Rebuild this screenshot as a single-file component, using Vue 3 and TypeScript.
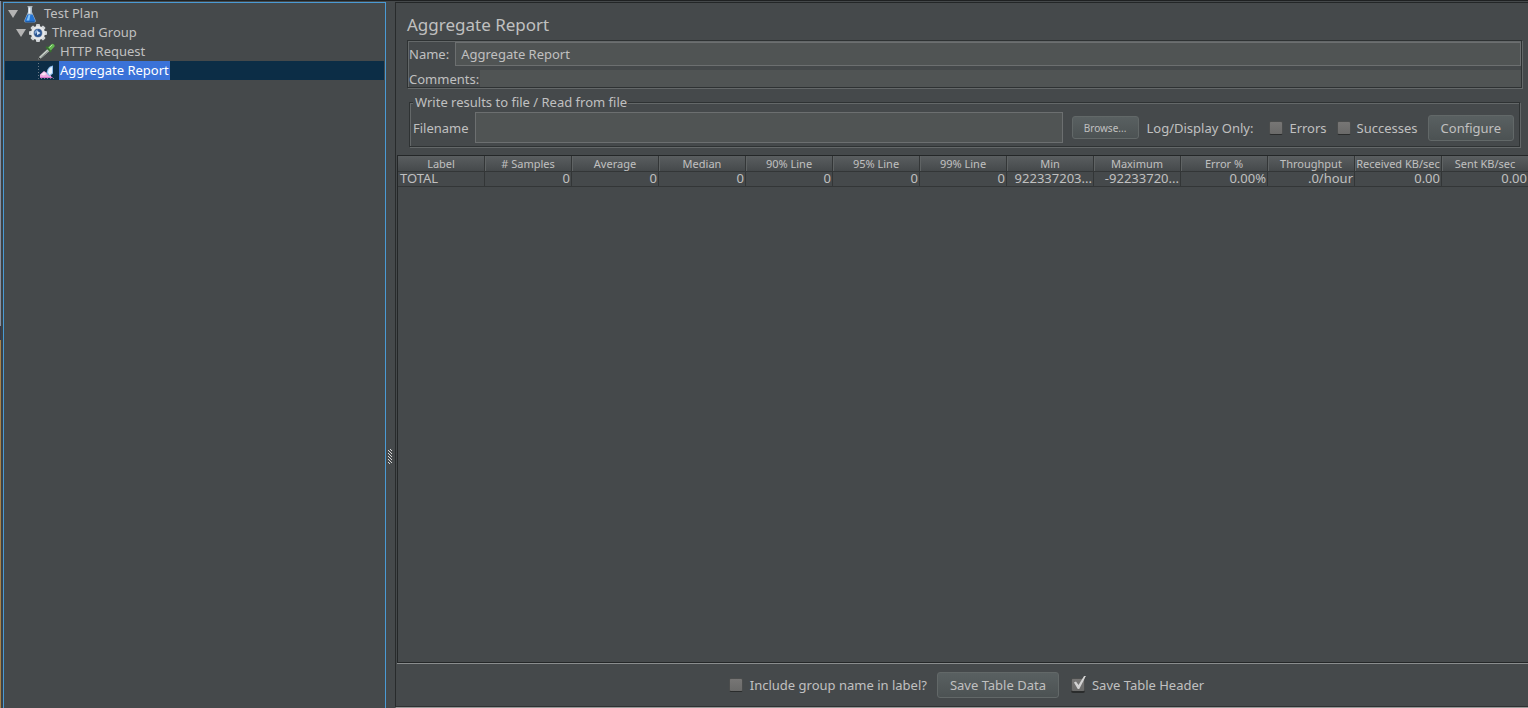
<script setup lang="ts">
import { ref } from 'vue'

type IconName = 'flask' | 'gear' | 'dropper' | 'chart'

interface TreeNode {
  label: string
  icon: IconName
  depth: number
  open?: boolean
}

const nodes: TreeNode[] = [
  { label: 'Test Plan', icon: 'flask', depth: 0, open: true },
  { label: 'Thread Group', icon: 'gear', depth: 1, open: true },
  { label: 'HTTP Request', icon: 'dropper', depth: 2 },
  { label: 'Aggregate Report', icon: 'chart', depth: 2 },
]
const selected = ref('Aggregate Report')

const name = ref('Aggregate Report')
const comments = ref('')
const filename = ref('')
const errorsOnly = ref(false)
const successesOnly = ref(false)
const includeGroup = ref(false)
const saveHeader = ref(true)

const columns: string[] = [
  'Label', '# Samples', 'Average', 'Median', '90% Line', '95% Line', '99% Line',
  'Min', 'Maximum', 'Error %', 'Throughput', 'Received KB/sec', 'Sent KB/sec',
]
const rows: string[][] = [
  ['TOTAL', '0', '0', '0', '0', '0', '0', '922337203...', '-92233720...', '0.00%', '.0/hour', '0.00', '0.00'],
]
</script>

<template>
  <div class="window">
    <div class="edge"></div>
    <nav class="tree" aria-label="Test plan tree">
      <ul>
        <li
          v-for="node in nodes"
          :key="node.label"
          class="node"
          :class="['depth-' + node.depth, { selected: node.label === selected }]"
          @click="selected = node.label"
        >
          <svg v-if="node.open" class="arrow" viewBox="0 0 10 8" aria-hidden="true">
            <path d="M0 0h10L5 8z" fill="#b4b4b4" />
          </svg>
          <svg v-if="node.icon === 'flask'" class="icon" viewBox="0 0 18 18" aria-hidden="true">
            <path d="M7 2h4v5l3.500 8q.6 2.500-1.500 2.500H5q-2.100 0-1.500-2.500L7 7z" fill="#aebfce" />
            <path d="M6.400 9.500h5.200l2.600 6q.3 1.500-1.200 1.500H5q-1.500 0-1.200-1.500z" fill="#2474d4" />
            <path d="M7.500 10h1.800l-1 5.500H5.500z" fill="#86c4f8" />
            <path d="M6.500 1h5v1.300h-5z" fill="#aeb4b8" />
            <path d="M7.800 2.500h1.600v6H7.500z" fill="#f4f7fa" />
            <path d="M4.500 17h9" stroke="#164b8c" />
          </svg>
          <svg v-else-if="node.icon === 'gear'" class="icon" viewBox="0 0 18 18" aria-hidden="true">
            <g fill="#cfd3d6">
              <rect v-for="a in 4" :key="a" x="7" y="0" width="4" height="18" rx="1" :transform="`rotate(${a * 45} 9 9)`" />
              <circle cx="9" cy="9" r="7" fill="#e6e8ea" />
            </g>
            <circle cx="9" cy="9" r="4.600" fill="#9aa9bb" />
            <circle cx="9" cy="9" r="3.900" fill="#2b5592" />
            <path d="M5.500 8.500q1-3 3.500-3L7.500 9l-1.500 1z" fill="#86a9d6" />
            <path d="M8 6.800l3.600 2.200L8 11.200z" fill="#d5e5f7" />
          </svg>
          <svg v-else-if="node.icon === 'dropper'" class="icon" viewBox="0 0 18 18" aria-hidden="true">
            <path d="M1 17l1.500-3.500 8-7.500 2 2-8 7z" fill="#c5ccc6" />
            <path d="M3.500 15l8-7" stroke="#7f8783" />
            <path d="M1 17l1.500-2.500 1 1z" fill="#252829" />
            <path d="M8.500 4.500l5 5 1.500-1.500-5-5z" fill="#35702d" />
            <path d="M11 4.500l3.300-3.300q1.400-1 2.700.2t.1 2.700l-3.300 3.400z" fill="#62b550" />
            <path d="M12.500 4.500l2.700-2.700" stroke="#b5eaa5" />
          </svg>
          <svg v-else class="icon" viewBox="0 0 18 18" aria-hidden="true">
            <path d="M1.500 1v15.500H17" fill="none" stroke="#6b7986" stroke-dasharray="1 2" />
            <path d="M3 16v-3.500l4-3.500 3 2 3 1 2 4z" fill="#f0a9df" />
            <path d="M4 12.500l3-2.500 2.500 2-2.500 1.500-2-.5z" fill="#fbe3f5" />
            <path d="M9.500 11.500q.5-5 3.500-7l3-1v8l-3.500 3z" fill="#8fbcea" />
            <path d="M11 10.500q.5-4 2.500-5l1.500-.5v6l-2.500 2z" fill="#e9f3fd" />
            <path d="M3 15.500h12.500" stroke="#d776cb" />
          </svg>
          <span class="label">{{ node.label }}</span>
        </li>
      </ul>
    </nav>
    <div class="splitter" role="separator" aria-orientation="vertical">
      <svg viewBox="0 0 5 16" aria-hidden="true">
        <path
          d="M3 0h1v1h-1zM1 1h1v1h-1zM4 1h1v1h-1zM2 2h1v1h-1zM3 3h1v1h-1zM1 4h1v1h-1zM4 4h1v1h-1zM2 5h1v1h-1zM3 6h1v1h-1zM1 7h1v1h-1zM4 7h1v1h-1zM2 8h1v1h-1zM3 9h1v1h-1zM1 10h1v1h-1zM4 10h1v1h-1zM2 11h1v1h-1zM3 12h1v1h-1zM1 13h1v1h-1zM4 13h1v1h-1zM2 14h1v1h-1z"
          fill="#d8d8d8"
        />
      </svg>
    </div>
    <main class="panel">
      <h1>Aggregate Report</h1>
      <section class="etched identity">
        <div class="line name-line">
          <label for="name">Name:</label>
          <input id="name" v-model="name" type="text" />
        </div>
        <div class="line comment-line">
          <label for="comments">Comments:</label>
          <input id="comments" v-model="comments" type="text" />
        </div>
      </section>
      <fieldset class="etched">
        <legend>Write results to file / Read from file</legend>
        <div class="file-row">
          <label for="filename">Filename</label>
          <input id="filename" v-model="filename" type="text" />
          <button type="button" class="small">Browse...</button>
          <span class="only">Log/Display Only:</span>
          <label class="check"><input v-model="errorsOnly" type="checkbox" />Errors</label>
          <label class="check"><input v-model="successesOnly" type="checkbox" />Successes</label>
          <button type="button">Configure</button>
        </div>
      </fieldset>
      <div class="results">
        <table>
          <thead>
            <tr><th v-for="c in columns" :key="c" scope="col">{{ c }}</th></tr>
          </thead>
          <tbody>
            <tr v-for="row in rows" :key="row[0]">
              <td v-for="(cell, i) in row" :key="i">{{ cell }}</td>
            </tr>
          </tbody>
        </table>
      </div>
      <footer>
        <label class="check"><input v-model="includeGroup" type="checkbox" />Include group name in label?</label>
        <button type="button">Save Table Data</button>
        <label class="check"><input v-model="saveHeader" type="checkbox" />Save Table Header</label>
      </footer>
    </main>
  </div>
</template>

<style>
body {
  margin: 0;
  background: #45494b;
}
</style>

<style scoped>
* {
  box-sizing: border-box;
}
.window {
  display: flex;
  height: 100vh;
  overflow: hidden;
  background: #45494b;
  border-top: 1px solid #1f2122;
  color: #c0c0c0;
  font: 13px/16px "Noto Sans", "Open Sans", sans-serif;
}
.edge {
  width: 3px;
  flex: none;
  border-right: 2px solid #3c4144;
  background: linear-gradient(#7f8fa8 0, #8792a4 46%, #343b4e 46%, #343b4e 48%, #a8834a 48%);
}
.tree {
  width: 383px;
  flex: none;
  margin-top: 1px;
  border: 1px solid #4a9ad4;
  border-bottom: 0;
}
.tree ul {
  list-style: none;
  margin: 0;
  padding: 1px 1px 0;
}
.node {
  display: flex;
  align-items: center;
  height: 19px;
  cursor: default;
}
.depth-0 { padding-left: 3px; }
.depth-1 { padding-left: 11px; }
.depth-2 { padding-left: 32px; }
.arrow {
  width: 10px;
  height: 8px;
  margin-right: 3px;
}
.icon {
  width: 18px;
  height: 18px;
}
.label {
  padding: 0 1px 0 5px;
  line-height: 19px;
}
.depth-2 .label {
  margin-left: 4px;
  padding-left: 1px;
}
.selected {
  background: #0c2d46;
}
.selected .label {
  background: #3a72d8;
  color: #fff;
}
.splitter {
  display: flex;
  width: 9px;
  flex: none;
  align-items: center;
  padding: 204px 0 0 1px;
}
.splitter svg {
  width: 5px;
  height: 16px;
}
.panel {
  display: flex;
  flex: 1;
  flex-direction: column;
  min-width: 0;
  margin-top: 1px;
  border-top: 1px solid #232627;
  border-left: 1px solid #282b2c;
  border-bottom: 1px solid #999;
}
h1 {
  margin: 11px 11px 4px;
  font-size: 17px;
  font-weight: 400;
  line-height: 22px;
}
.etched {
  border: 1px solid #2e3233;
  box-shadow: 1px 1px 0 #646869, inset 1px 1px 0 #646869;
}
.identity {
  margin: 0 6px 0 11px;
  padding: 1px 0 0 1px;
}
.line {
  display: flex;
  align-items: center;
}
.name-line {
  gap: 6px;
  height: 24px;
}
.comment-line {
  height: 21px;
  align-items: flex-end;
}
.comment-line label {
  margin-right: 1px;
}
input[type="text"] {
  flex: 1;
  min-width: 0;
  height: 24px;
  padding: 0 5px;
  border: 1px solid #6c6f70;
  border-radius: 0;
  outline: 0;
  background: #505454;
  color: inherit;
  font: inherit;
}
.comment-line input[type="text"] {
  height: 17px;
  border: 0;
}
fieldset {
  min-width: 0;
  margin: 6px 8px 8px 13px;
  padding: 0 5px 3px 3px;
}
legend {
  padding: 0 1px 0 2px;
  background: #45494b;
}
.file-row {
  display: flex;
  align-items: center;
  margin-top: 2px;
}
.file-row input[type="text"] {
  height: 31px;
  margin: 0 9px 0 6px;
}
button {
  height: 26px;
  padding: 0 12px;
  border: 1px solid #626868;
  border-radius: 3px;
  background: linear-gradient(#596061, #4c5253);
  color: inherit;
  font: inherit;
}
.small {
  width: 67px;
  height: 23px;
  padding: 0;
  font-size: 10px;
}
.only {
  margin: 0 16px 0 8px;
}
.check {
  display: flex;
  align-items: center;
  gap: 6px;
  margin-right: 10px;
}
input[type="checkbox"] {
  width: 14px;
  height: 14px;
  flex: none;
  margin: 0;
  appearance: none;
  border: 1px solid #4b4d4d;
  border-bottom-color: #2a2c2c;
  border-radius: 2px;
  background: linear-gradient(#777675, #6a6a69);
}
input[type="checkbox"]:checked::before {
  content: "";
  display: block;
  width: 12px;
  height: 13px;
  margin: -3px 0 0 2px;
  background: #d2d2d2;
  clip-path: polygon(0 50%, 17% 43%, 38% 70%, 84% 0, 100% 0, 44% 100%, 32% 100%);
}
input[type="checkbox"]:checked {
  filter: drop-shadow(0 1px 0 #2a2c2c);
}
.results {
  flex: 1;
  min-height: 0;
  margin-left: 1px;
  overflow: hidden;
  border: 1px solid #242728;
  border-right: 0;
  box-shadow: 0 1px 0 #8a8d8e;
}
table {
  width: 100%;
  table-layout: fixed;
  border-collapse: separate;
  border-spacing: 0;
}
th,
td {
  width: 7.7%;
  padding: 0 1px;
  border-right: 1px solid #333637;
  border-bottom: 1px solid #333637;
  line-height: 15px;
  text-align: right;
  white-space: nowrap;
}
td {
  padding: 0 1px 1px 2px;
  line-height: 13px;
}
th {
  padding: 0;
  background: linear-gradient(#5a5e60, #45494b);
  font-size: 11px;
  font-weight: 400;
  text-align: center;
}
th + th {
  box-shadow: inset 1px 0 0 #5f6364;
}
td:first-child {
  text-align: left;
}
th:last-child,
td:last-child {
  width: auto;
  border-right: 0;
}
footer {
  display: flex;
  height: 44px;
  flex: none;
  align-items: center;
  justify-content: center;
  padding: 1px 0 0 9px;
  border-bottom: 1px solid #2e3132;
}
footer button {
  margin-right: 12px;
}
footer .check {
  gap: 7px;
}
footer .check:last-child {
  margin-right: 0;
}
</style>
